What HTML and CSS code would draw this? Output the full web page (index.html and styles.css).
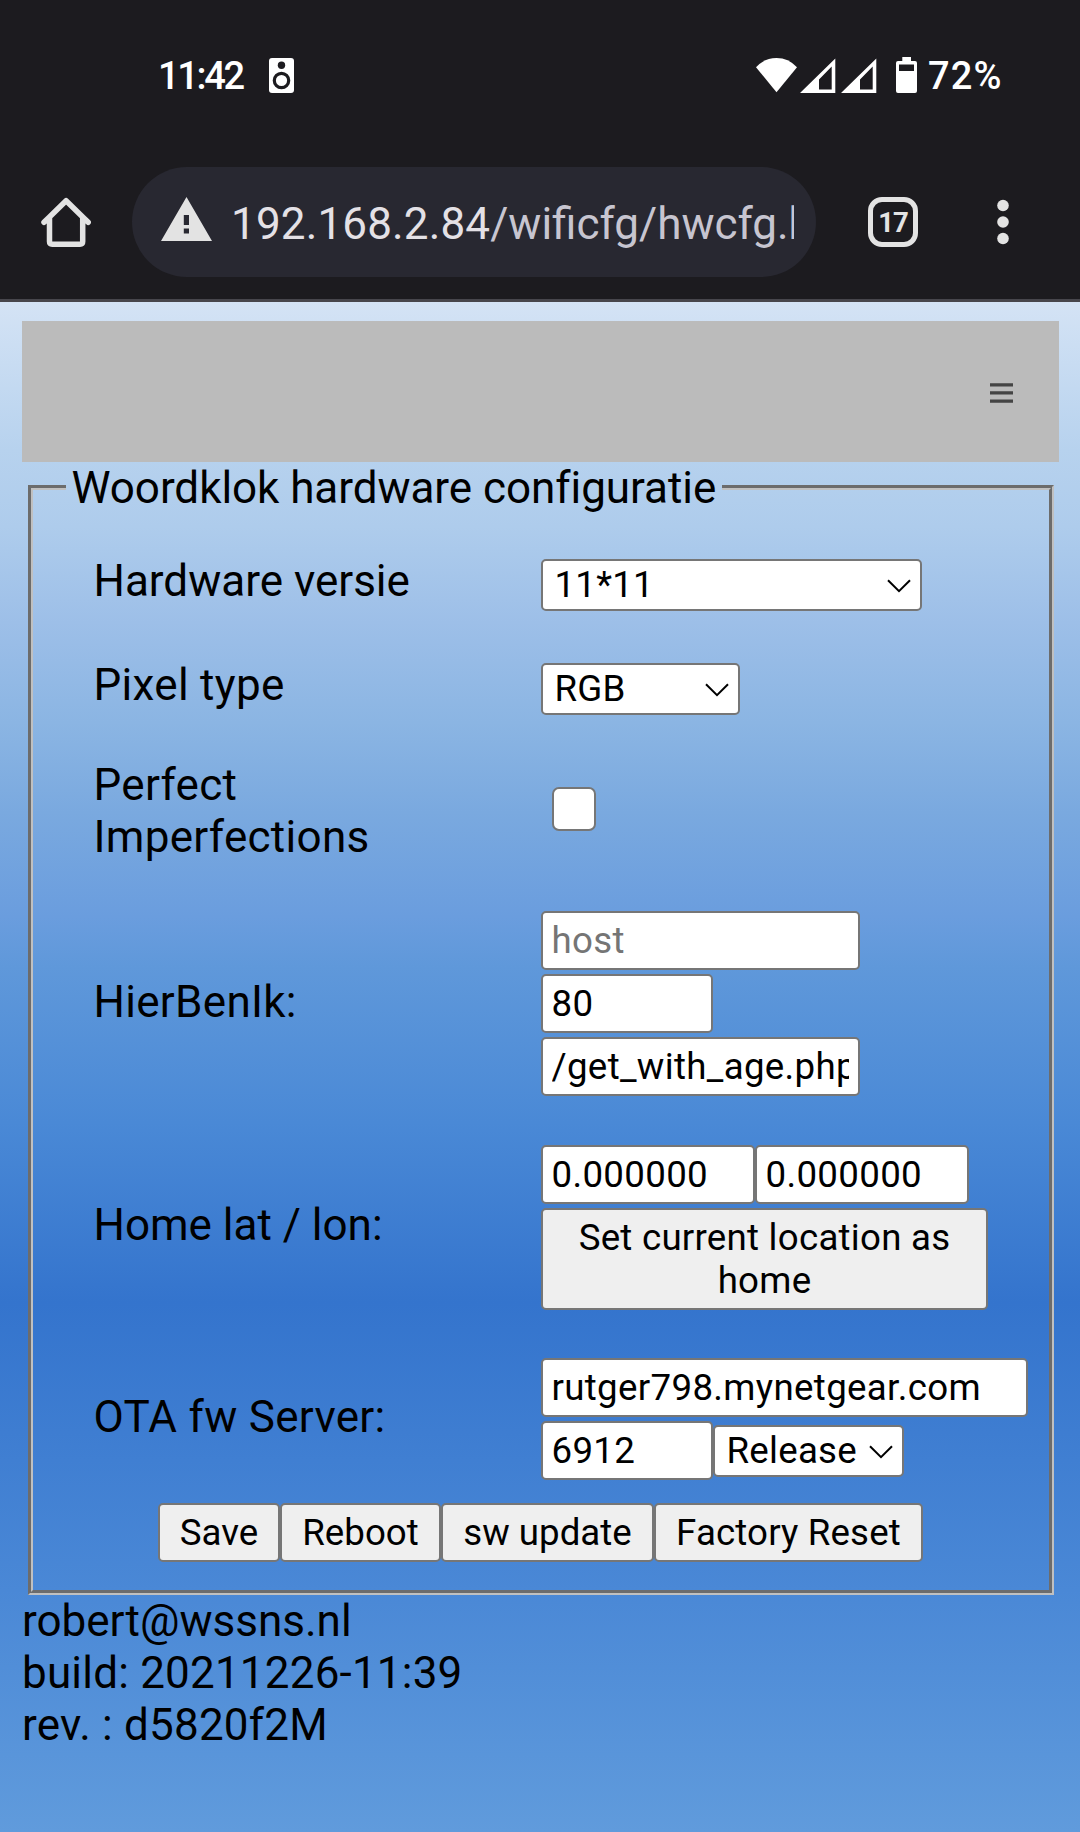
FILE: index.html
```html
<!DOCTYPE html>
<html lang="nl">
<head>
<meta charset="utf-8">
<title>Woordklok hardware configuratie</title>
<link rel="stylesheet" href="styles.css">
</head>
<body>
<header class="chrome">
  <div class="status">
    <div class="status-left">
      <span class="clock">11:42</span>
      <svg class="speaker" width="25" height="35" viewBox="0 0 25 35"><rect width="25" height="35" rx="3" fill="#fff"/><circle cx="12.5" cy="7.3" r="3.7" fill="#1c1b1f"/><circle cx="12.5" cy="22.5" r="7.2" fill="none" stroke="#1c1b1f" stroke-width="3.2"/></svg>
    </div>
    <div class="status-right">
      <svg width="162" height="37" viewBox="0 0 162 37" fill="#fff">
        <path d="M0 11.3Q8.500 2 20.500 2T41 11.300L20.500 36.300Z"/>
        <path fill-rule="evenodd" d="M44 37L79.300 2.500V37ZM63 23.500V33.500H75.700V10.500Z"/>
        <path fill-rule="evenodd" d="M85 37L120.300 2.500V37ZM104 23.500V33.500H116.700V10.500Z"/>
        <path fill-rule="evenodd" d="M146.300 1H155V5H159Q161 5 161 7V35Q161 37 159 37H142Q140 37 140 35V7Q140 5 142 5H146.300ZM143 8.500V15H158V8.500Z"/>
      </svg>
      <span class="percent">72%</span>
    </div>
  </div>
  <nav class="toolbar">
    <svg class="home" width="50" height="50" viewBox="0 0 50 50" fill="none" stroke="#e3e3e3" stroke-width="5.500" stroke-linejoin="round" stroke-linecap="round"><path d="M3 25.300L8.500 20V44.500Q8.500 47.200 11.200 47.200H39Q41.700 47.200 41.700 44.500V20L47.200 25.300M8.500 20L25.100 3.700L41.700 20"/></svg>
    <div class="address">
      <svg width="51" height="44" viewBox="0 0 51 44"><path fill-rule="evenodd" fill="#e3e3e3" d="M25.500 0L51 44H0ZM22.800 18V28H28V18ZM22.800 31.500V36.500H28V31.500Z"/></svg>
      <div class="url"><span class="host">192.168.2.84</span>/wificfg/hwcfg.html</div>
    </div>
    <div class="tabs">17</div>
    <svg class="more" width="12" height="46" viewBox="0 0 12 46" fill="#e3e3e3"><circle cx="6" cy="6.500" r="5.800"/><circle cx="6" cy="23" r="5.800"/><circle cx="6" cy="39.500" r="5.800"/></svg>
  </nav>
</header>
<main class="page">
  <div class="menu">
    <svg width="23" height="20" viewBox="0 0 23 20" fill="#444"><path d="M0 .3H23V3.500H0ZM0 8.300H23V11.500H0ZM0 16.500H23V19.700H0Z"/></svg>
  </div>
  <fieldset class="config">
    <legend>Woordklok hardware configuratie</legend>
    <div class="row row-select">
      <label>Hardware versie</label>
      <div class="controls low">
        <div class="select w-version"><select><option>11*11</option></select><svg width="24" height="14" viewBox="0 0 24 14"><path d="M1 1.200L12 12.200L23 1.200"/></svg></div>
      </div>
    </div>
    <div class="row row-select">
      <label class="spaced">Pixel type</label>
      <div class="controls low">
        <div class="select w-pixel"><select><option>RGB</option></select><svg width="24" height="14" viewBox="0 0 24 14"><path d="M1 1.200L12 12.200L23 1.200"/></svg></div>
      </div>
    </div>
    <div class="row row-check">
      <label class="spaced">Perfect Imperfections</label>
      <div class="controls high"><input type="checkbox" class="check"></div>
    </div>
    <div class="row row-host">
      <label class="spaced">HierBenIk:</label>
      <div class="controls">
        <input class="field w-text" type="text" placeholder="host">
        <input class="field w-port" type="text" value="80">
        <input class="field w-text" type="text" value="/get_with_age.php">
      </div>
    </div>
    <div class="row row-home">
      <label>Home lat / lon:</label>
      <div class="controls">
        <div class="line"><input class="field w-coord" type="text" value="0.000000"><input class="field w-coord" type="text" value="0.000000"></div>
        <button type="button" class="locate">Set current location as home</button>
      </div>
    </div>
    <div class="row row-ota">
      <label class="spaced">OTA fw Server:</label>
      <div class="controls">
        <input class="field w-server" type="text" value="rutger798.mynetgear.com">
        <div class="line"><input class="field w-port" type="text" value="6912"><div class="select w-release"><select><option>Release</option></select><svg width="24" height="14" viewBox="0 0 24 14"><path d="M1 1.200L12 12.200L23 1.200"/></svg></div></div>
      </div>
    </div>
    <div class="actions">
      <button type="button" class="b-save">Save</button><button type="button" class="b-reboot">Reboot</button><button type="button" class="b-update">sw update</button><button type="button" class="b-reset">Factory Reset</button>
    </div>
  </fieldset>
  <footer>robert@wssns.nl<br><span class="build">build: 20211226-11:39<br>rev. : d5820f2M</span></footer>
</main>
</body>
</html>
```
FILE: styles.css
```css
* { box-sizing: border-box; }

body {
  margin: 0;
  height: 1832px;
  overflow: hidden;
  font-family: Roboto, sans-serif;
  font-size: 44px;
  line-height: 52px;
  color: #000;
}

svg { display: block; flex: none; }

/* Phone status bar and browser toolbar */
.chrome {
  height: 302px;
  background: #1c1b1f;
  border-bottom: 3px solid #47464c;
}

.status {
  display: flex;
  justify-content: space-between;
  height: 167px;
  padding: 56px 78px 0 158px;
  color: #fff;
  font-size: 38px;
  font-weight: 500;
  line-height: 40px;
}

.status-left, .status-right { display: flex; align-items: flex-start; }
.clock { width: 111px; letter-spacing: -2.3px; }
.speaker { margin-top: 2px; }
.percent { width: 74px; margin-left: 10px; letter-spacing: 1.2px; white-space: nowrap; }

.toolbar {
  display: flex;
  align-items: center;
  height: 110px;
  padding: 0 71px 0 41px;
}

.address {
  display: flex;
  align-items: center;
  width: 684px;
  height: 110px;
  margin-left: 41px;
  padding: 0 22px 6px 29px;
  border-radius: 55px;
  background: #282831;
}

.url {
  width: 563px;
  margin-left: 19px;
  padding-top: 9px;
  overflow: hidden;
  white-space: nowrap;
  color: #c7c5d0;
}

.host { color: #e4e1e6; letter-spacing: 0.15px; }

.tabs {
  width: 50px;
  height: 50px;
  margin-left: 52px;
  border: 5.5px solid #e3e3e3;
  border-radius: 14px;
  color: #e3e3e3;
  font-size: 27.5px;
  font-weight: 700;
  line-height: 41px;
  text-align: center;
  letter-spacing: -1px;
}

.more { margin-left: auto; }

/* Web page */
.page {
  height: 1530px;
  padding: 19px 21px 0 22px;
  background: linear-gradient(#d4e3f5 0, #b7d2ee 148px, #aeccec 225px, #9dbfe8 320px, #8bb5e3 420px, #7aa9df 510px, #6a9dde 615px, #5f98da 665px, #4a89d6 820px, #3474cd 1000px, #4a88d6 1288px, #609bdc 1530px);
}

.menu {
  display: flex;
  align-items: center;
  justify-content: flex-end;
  height: 141px;
  padding: 3px 46px 0 0;
  background: #bbb;
}

.config {
  height: 1133px;
  margin: 0 5px 0 6px;
  padding: 16px 0 0 33px;
  border: 5px groove rgb(192, 192, 192);
}

.config legend { padding: 2px 5.5px 0; line-height: 49px; letter-spacing: -0.05px; }

.row {
  display: grid;
  grid-template-columns: 447.5px 1fr;
  align-items: center;
  padding-left: 27.5px;
}

.row label { max-width: 300px; }
.row label.spaced { letter-spacing: 0.3px; }
.row-select label { max-width: none; }
.row-select { height: 104px; }
.row-check { height: 148px; }
.row-host { height: 234px; }
.row-home { height: 212px; }
.row-ota { height: 172px; }

.controls {
  display: flex;
  flex-direction: column;
  align-items: flex-start;
  gap: 4px;
  padding-top: 4px;
}

.controls.low { padding-top: 7px; }
.controls.high { padding: 0 0 4px 11px; }
.row-host .controls { padding-top: 2px; }
.line { display: flex; align-items: center; }

input, select, button {
  display: block;
  margin: 0;
  border: 2px solid #767676;
  border-radius: 5px;
  font: 36.67px/43px Roboto, sans-serif;
  color: #000;
  background: #fff;
}

.field { height: 59px; padding: 0 9px 0 8.5px; letter-spacing: 0.33px; }
.field::placeholder { color: #757575; opacity: 1; }
.w-text { width: 319px; }
.w-port { width: 172px; }
.w-coord { width: 214px; }
.w-server { width: 487px; }

.select { position: relative; height: 52px; }
.select select { appearance: none; width: 100%; height: 100%; padding: 0 0 0 11.5px; letter-spacing: 0.25px; }
.select svg {
  position: absolute;
  top: 20px;
  right: 11px;
  fill: none;
  stroke: #000;
  stroke-width: 2;
}
.w-version { width: 381px; }
.w-pixel { width: 199px; }
.w-release { width: 190.5px; }

.check {
  appearance: none;
  width: 44px;
  height: 44px;
  border-width: 2.75px;
  border-radius: 7px;
}

button { height: 59px; padding: 0; background: #efefef; text-align: center; white-space: nowrap; }
.locate { width: 447px; height: 102px; padding: 0 16px; letter-spacing: 0.25px; white-space: normal; }

.actions { display: flex; padding-left: 92px; }
.b-save { width: 122px; }
.b-reboot { width: 161px; }
.b-update { width: 213px; }
.b-reset { width: 269px; letter-spacing: 0.15px; }

.build { letter-spacing: 0.2px; }
```
